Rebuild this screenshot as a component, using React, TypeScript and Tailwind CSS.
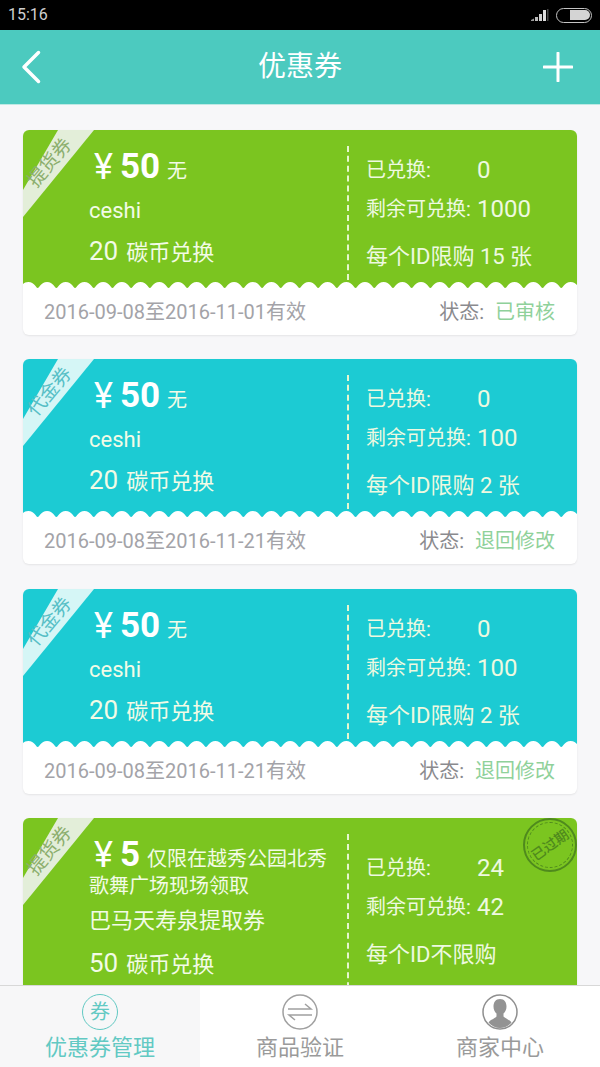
type Coupon = {
  kind: string;
  color: "green" | "cyan";
  price: string;
  note: string;
  note2?: string;
  name: string;
  cost: string;
  used: string;
  left: string;
  limit: string;
  date?: string;
  status?: string;
  expired?: boolean;
};

const coupons: Coupon[] = [
  { kind: "提货券", color: "green", price: "50", note: "无", name: "ceshi", cost: "20", used: "0", left: "1000", limit: "每个ID限购 15 张", date: "2016-09-08至2016-11-01有效", status: "已审核" },
  { kind: "代金券", color: "cyan", price: "50", note: "无", name: "ceshi", cost: "20", used: "0", left: "100", limit: "每个ID限购 2 张", date: "2016-09-08至2016-11-21有效", status: "退回修改" },
  { kind: "代金券", color: "cyan", price: "50", note: "无", name: "ceshi", cost: "20", used: "0", left: "100", limit: "每个ID限购 2 张", date: "2016-09-08至2016-11-21有效", status: "退回修改" },
  { kind: "提货券", color: "green", price: "5", note: "仅限在越秀公园北秀", note2: "歌舞广场现场领取", name: "巴马天寿泉提取券", cost: "50", used: "24", left: "42", limit: "每个ID不限购", expired: true },
];

// white wavy edge between the coloured part and the footer
const Scallop = () => {
  let d = "M0 8";
  for (let i = 0; i < 30; i++) {
    const x = -4 + i * 18.7;
    d += ` L${x} 7 C${x + 2} 7 ${x + 3} 1 ${x + 9.35} 1 C${x + 15.7} 1 ${x + 16.7} 7 ${x + 18.7} 7`;
  }
  d += " L554 8 Z";
  return (
    <svg className="absolute left-0 bottom-0 block" width="554" height="8">
      <path d={d} fill="#ffffff" />
    </svg>
  );
};

const Stamp = () => (
  <div className="absolute right-0 top-0 w-[54px] h-[54px] rounded-full border-2 border-[#4f8a1d] flex items-center justify-center">
    <div className="w-[46px] h-[46px] rounded-full border border-dashed border-[#4f8a1d] flex items-center justify-center">
      <span className="text-[14px] leading-none font-medium text-[#4f8a1d] -rotate-[35deg] whitespace-nowrap">已过期</span>
    </div>
  </div>
);

const CouponCard = ({ c }: { c: Coupon }) => {
  const green = c.color === "green";
  const long = !!c.note2;
  return (
    <div className="rounded-[6px] bg-white shadow-[0_1px_2px_rgba(0,0,0,0.08)] overflow-hidden shrink-0">
      <div className={`relative flex ${long ? "h-[190px]" : "h-[159px]"} ${green ? "bg-[#7bc520]" : "bg-[#1ccbd3]"}`}>
        <svg className="absolute left-0 top-0" width="72" height="88">
          <polygon points="35,0 71,0 0,87 0,60" fill={green ? "#e3eed9" : "#d5f6f6"} />
        </svg>
        <span className={`absolute left-[-2px] top-[23px] w-[57px] text-center text-[19px] leading-none -rotate-[50deg] ${green ? "text-[#8cae6e]" : "text-[#57bfc6]"}`}>
          {c.kind}
        </span>
        <div className="w-[324px] shrink-0 pl-[66px] text-[#f2fbe6]">
          <div className="h-[55px] flex items-end ml-[5px] whitespace-nowrap">
            <span className="text-[36px] leading-[36px] text-white">¥</span>
            <span className="font-bold text-[35px] leading-[36px] ml-[7px] text-white">{c.price}</span>
            <span className="text-[20px] leading-[28px] ml-[7px]">{c.note}</span>
          </div>
          {long && <div className="text-[20px] leading-[26px]">{c.note2}</div>}
          <div className={`text-[22px] leading-[24px] ${long ? "mt-[10px]" : "mt-[14px]"}`}>{c.name}</div>
          <div className={`text-[22px] leading-[30px] ${long ? "mt-[15px]" : "mt-[13px]"}`}>
            <span className="text-[26px] mr-[8px]">{c.cost}</span>碳币兑换
          </div>
        </div>
        <div className={`w-0 mt-[16px] border-l-2 border-dashed border-[#e6f6cf] ${long ? "h-[174px]" : "h-[134px]"}`} />
        <div className={`flex-1 pl-[17px] text-[#eef9e0] text-[20px] ${long ? "pt-[15px]" : "pt-[5px]"}`}>
          <div className="mt-[23px] h-[24px] flex items-center leading-[24px]">
            <span className="w-[111px]">已兑换:</span>
            <span className="text-[24px]">{c.used}</span>
          </div>
          <div className="mt-[15px] h-[24px] flex items-center leading-[24px]">
            <span className="w-[111px] whitespace-nowrap">剩余可兑换:</span>
            <span className="text-[24px]">{c.left}</span>
          </div>
          <div className="mt-[24px] h-[24px] leading-[24px] text-[22px] whitespace-nowrap">{c.limit}</div>
        </div>
        {c.expired && <Stamp />}
        {!long && <Scallop />}
      </div>
      {c.date && (
        <div className="h-[46px] flex items-center justify-between pl-[21px] pr-[22px] text-[20px]">
          <span className="text-[#a3a3a8]">{c.date}</span>
          <span className="text-[#8a8a8e]">
            状态:<span className="ml-[11px] text-[#8fd19a]">{c.status}</span>
          </span>
        </div>
      )}
    </div>
  );
};

const App = () => {
  return (
    <div className="w-[600px] h-[1067px] overflow-hidden flex flex-col bg-[#f7f7f9] font-['Roboto','Noto_Sans_CJK_SC',sans-serif]">
      <div className="h-[30px] shrink-0 bg-black flex items-center justify-between pl-[8px] pr-[8px]">
        <span className="text-[#cfcfcf] text-[16px] leading-none">15:16</span>
        <div className="flex items-center gap-[7px]">
          <svg width="19" height="14" viewBox="0 0 19 14">
            <polygon points="1,12 4,10.500 4,13 1,13" fill="#9a9a9a" />
            <rect x="5" y="9" width="3" height="4" fill="#bbbbbb" />
            <rect x="9" y="6" width="3" height="7" fill="#d0d0d0" />
            <rect x="13" y="2" width="3" height="11" fill="#dddddd" />
            <rect x="17" y="1" width="1.500" height="12" fill="#444444" />
          </svg>
          <div className="w-[36px] h-[15px] rounded-full border border-[#c4c4c4] flex justify-end p-[1.500px]">
            <div className="w-[20px] h-full rounded-r-full rounded-l-[2px] bg-[#d4d4d4]" />
          </div>
        </div>
      </div>

      <div className="h-[75px] shrink-0 bg-[#4ccabf] flex items-center border-b border-[#bfe9e4]">
        <div className="w-[100px] pl-[21px]">
          <svg className="block" width="20" height="34" viewBox="0 0 20 34" fill="none" stroke="#ffffff" strokeWidth="3.500" strokeLinecap="round" strokeLinejoin="round">
            <path d="M17.500 2.500 3 17l14.500 14.500" />
          </svg>
        </div>
        <span className="flex-1 text-center text-white text-[28px] leading-none">优惠券</span>
        <div className="w-[100px] pr-[27px] flex justify-end">
          <svg className="block" width="30" height="30" viewBox="0 0 30 30" stroke="#ffffff" strokeWidth="3" strokeLinecap="round">
            <path d="M1 15h28M15 1v28" />
          </svg>
        </div>
      </div>

      <div className="flex-1 min-h-0 overflow-hidden px-[23px] pt-[25px] flex flex-col gap-[24.4px]">
        {coupons.map((c, i) => (
          <CouponCard key={i} c={c} />
        ))}
      </div>

      <div className="h-[82px] shrink-0 flex bg-white border-t border-[#d8d8d8] relative z-10">
        <div className="w-[200px] bg-[#f7f7f8] flex flex-col items-center pt-[8px]">
          <div className="w-[36px] h-[36px] rounded-full border-[1.500px] border-[#62c9c3] flex items-center justify-center text-[#62c9c3] text-[20px] leading-none">券</div>
          <span className="mt-[5px] text-[22px] leading-[26px] text-[#62c9c3]">优惠券管理</span>
        </div>
        <div className="w-[200px] flex flex-col items-center pt-[8px]">
          <svg width="36" height="36" viewBox="0 0 36 36" fill="none" stroke="#a0a0a0" strokeWidth="1.500">
            <circle cx="18" cy="18" r="17" />
            <path d="M6 15h23l-6-5" />
            <path d="M30 21H7l6 5" />
          </svg>
          <span className="mt-[5px] text-[22px] leading-[26px] text-[#9a9a9a]">商品验证</span>
        </div>
        <div className="w-[200px] flex flex-col items-center pt-[8px]">
          <svg width="36" height="36" viewBox="0 0 36 36">
            <circle cx="18" cy="18" r="17" fill="#ffffff" stroke="#8f8f8f" strokeWidth="1.500" />
            <path d="M18 5c-4.500 0-6.500 3.500-6.500 7.500 0 3 1.200 5.500 3 7v3c-1.500 2-6 3-8 6 3 3.500 7 5.500 11.500 5.500s8.500-2 11.500-5.500c-2-3-6.500-4-8-6v-3c1.800-1.500 3-4 3-7C24.500 8.500 22.500 5 18 5z" fill="#939393" />
          </svg>
          <span className="mt-[5px] text-[22px] leading-[26px] text-[#9a9a9a]">商家中心</span>
        </div>
      </div>
    </div>
  );
};

export default App;
